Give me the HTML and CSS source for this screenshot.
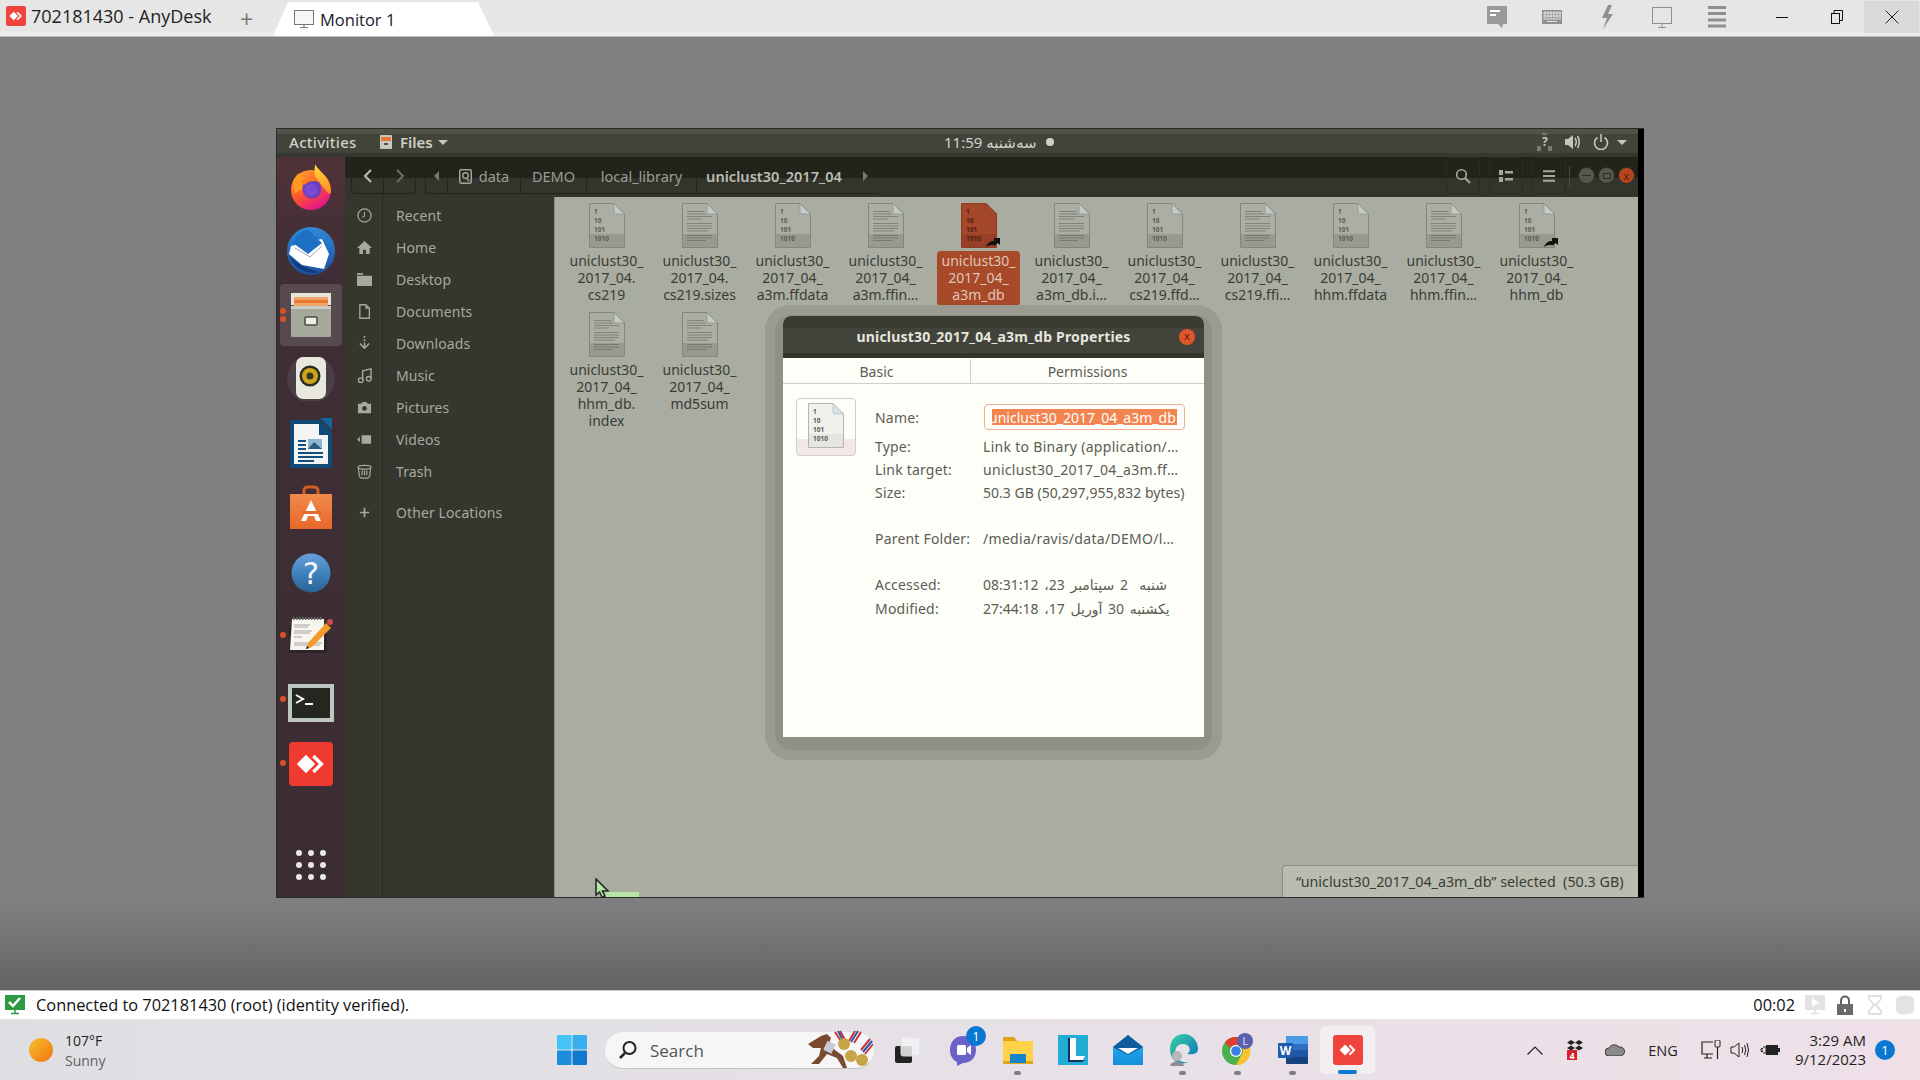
FILE: index.html
```html
<!DOCTYPE html>
<html lang="en">
<head>
<meta charset="utf-8">
<title>702181430 - AnyDesk</title>
<link rel="stylesheet" href="styles.css">
</head>
<body>
<svg class="defs" aria-hidden="true">
  <defs>
    <linearGradient id="ffBody" x1="0" y1="0" x2="0.6" y2="1"><stop offset="0" stop-color="#ffb02e"/><stop offset=".55" stop-color="#ff5a2c"/><stop offset="1" stop-color="#e31587"/></linearGradient>
    <linearGradient id="ffTop" x1="0" y1="0" x2="0" y2="1"><stop offset="0" stop-color="#ffe03a"/><stop offset="1" stop-color="#ff8a1f"/></linearGradient>
    <linearGradient id="tbBlue" x1="0" y1="0" x2="0" y2="1"><stop offset="0" stop-color="#2f8ad8"/><stop offset="1" stop-color="#1b4f9c"/></linearGradient>
    <linearGradient id="helpBlue" x1="0" y1="0" x2="0" y2="1"><stop offset="0" stop-color="#6b9fdc"/><stop offset=".5" stop-color="#3f83bd"/><stop offset="1" stop-color="#2a6394"/></linearGradient>
    <linearGradient id="bagOrange" x1="0" y1="0" x2="0" y2="1"><stop offset="0" stop-color="#f08a4a"/><stop offset="1" stop-color="#e8682a"/></linearGradient>
    <linearGradient id="edgeG" x1="0" y1="0" x2="1" y2="1"><stop offset="0" stop-color="#38d2a0"/><stop offset="1" stop-color="#0c6fc0"/></linearGradient>
    <linearGradient id="mailG" x1="0" y1="0" x2="0" y2="1"><stop offset="0" stop-color="#29b1ec"/><stop offset="1" stop-color="#1490dd"/></linearGradient>

    <symbol id="doc-base" viewBox="0 0 36 45">
      <path d="M.5.5H25L35.5 11V44.5H.5Z" fill="var(--sheet)" stroke="var(--edge)"/>
      <rect x="1" y="31" width="34" height="13" fill="var(--band)"/>
      <path d="M25 .5V9.500Q25 11 27 11H35.500Z" fill="var(--fold)" stroke="var(--edge)" stroke-width=".6"/>
    </symbol>
    <symbol id="doc-bin" viewBox="0 0 36 45">
      <use href="#doc-base"/>
      <g class="bin-text">
        <text x="5" y="11">1</text>
        <text x="5" y="20">10</text>
        <text x="5" y="29">101</text>
        <text x="5" y="38">1010</text>
      </g>
    </symbol>
    <symbol id="doc-txt" viewBox="0 0 36 45">
      <use href="#doc-base"/>
      <path d="M5 8.500H22M5 11H24M5 13.500H30M5 16H20M5 20.500H30M5 23H30M5 25.500H30M5 28H26M5 32.500H30M5 35H30M5 37.500H24" stroke="var(--ink)" stroke-width=".7" opacity=".75"/>
    </symbol>
    <symbol id="link-arrow" viewBox="0 0 14 12">
      <path d="M0 11C2 6 5 5 8 5V2H14V9L11.500 7L9 9.500C6 8.500 3 9 0 11Z" fill="#111"/>
    </symbol>
    <symbol id="anydesk-mark" viewBox="0 0 24 24">
      <path d="M8.500 5.500L15 12L8.500 18.500L2 12Z" fill="#fff"/>
      <path d="M14.500 5.500L21 12L14.500 18.500L12.800 16.800L17.600 12L12.800 7.200Z" fill="#fff"/>
    </symbol>
  </defs>
</svg>

<header class="rd-bar">
  <div class="rd-title">
    <svg class="rd-logo" viewBox="0 0 20 20"><rect width="20" height="20" rx="2" fill="#ef443b"/><use href="#anydesk-mark" x="2" y="2" width="16" height="16"/></svg>
    <span class="rd-title-text">702181430 - AnyDesk</span>
    <span class="rd-plus">+</span>
  </div>
  <div class="rd-tab">
    <svg class="rd-tab-icon" viewBox="0 0 20 20"><rect x=".5" y="1.500" width="19" height="14" fill="#f6f6f6" stroke="#777"/><path d="M10 15.500V18M6 18.500H14" stroke="#777" fill="none"/></svg>
    <span>Monitor 1</span>
  </div>
  <div class="rd-tools">
    <span class="rd-tool"><svg viewBox="0 0 20 22" width="20" height="22"><path d="M0 0H20V18H16L15 22L11 18H0Z" fill="#9a9a9a"/><path d="M3 4H13V6H3ZM3 8H9V10H3Z" fill="#fff"/></svg></span>
    <span class="rd-tool"><svg viewBox="0 0 20 14" width="20" height="14"><rect width="20" height="14" fill="#8f8f8f"/><path d="M1 3H19M1 6H19M1 9H19M3 1V8M6 1V8M9 1V8M12 1V8M15 1V8M18 1V8M5 11.500H15" stroke="#e6e6e6" fill="none"/></svg></span>
    <span class="rd-tool"><svg viewBox="0 0 14 24" width="14" height="24"><path d="M8 0L2 13H7L3 24L13 9H8L12 0Z" fill="#8f8f8f"/></svg></span>
    <span class="rd-tool"><svg viewBox="0 0 20 21" width="20" height="21"><rect x=".5" y=".5" width="19" height="16" fill="none" stroke="#8f8f8f"/><path d="M10 17V20M6 20.500H14" stroke="#8f8f8f" fill="none"/></svg></span>
    <span class="rd-tool"><svg viewBox="0 0 18 22" width="18" height="22"><path d="M0 1.500H18M0 7.500H18M0 14H18M0 20H18" stroke="#8f8f8f" stroke-width="3"/></svg></span>
  </div>
  <div class="rd-win">
    <span class="rd-ctl"><svg viewBox="0 0 12 12" width="12" height="12"><path d="M0 6.500H12" stroke="#111"/></svg></span>
    <span class="rd-ctl"><svg viewBox="0 0 12 14" width="12" height="14"><rect x=".5" y="3.500" width="8" height="10" fill="#e6e6e6" stroke="#111"/><path d="M3 3V.5H11.500V10.500H9" fill="none" stroke="#111"/></svg></span>
    <span class="rd-ctl rd-close"><svg viewBox="0 0 14 14" width="14" height="14"><path d="M.5.500L13.500 13.500M13.500.5L.5 13.500" stroke="#222"/></svg></span>
  </div>
</header>

<main class="remote">
  <section class="ubuntu">
    <div class="panel">
      <div class="panel-left">
        <span class="activities">Activities</span>
        <svg class="panel-files-icon" viewBox="0 0 14 14"><rect x="1" y="0" width="12" height="14" rx="1" fill="#c8c9c0"/><rect x="2" y="2" width="10" height="4" fill="#e9772f"/><rect x="5" y="8" width="4" height="2" fill="#555"/></svg>
        <span class="panel-app">Files</span>
        <span class="panel-caret"></span>
      </div>
      <div class="clock"><span dir="rtl">سه‌شنبه 11:59</span><span class="clock-dot"></span></div>
      <div class="panel-right">
        <svg viewBox="0 0 16 18" width="16" height="18"><rect x="5" y="0" width="5" height="2" fill="#77796f"/><rect x="0" y="13" width="4" height="5" fill="#77796f"/><rect x="11" y="13" width="4" height="5" fill="#77796f"/><text class="net-q" x="5" y="13">?</text></svg>
        <svg viewBox="0 0 16 16" width="16" height="16"><path d="M0 5H3L8 1V15L3 11H0Z" fill="#c5c6bd"/><path d="M10 4Q12.500 8 10 12M12.500 2Q16 8 12.500 14" fill="none" stroke="#c5c6bd" stroke-width="1.500"/></svg>
        <svg viewBox="0 0 16 16" width="16" height="16"><path d="M4.500 3.500A6.500 6.500 0 1 0 11.500 3.500M8 0V8" fill="none" stroke="#c5c6bd" stroke-width="1.600"/></svg>
        <span class="panel-caret"></span>
      </div>
    </div>
    <div class="ubuntu-body">
      <nav class="dock">
        <div class="dock-item">
          <svg viewBox="0 0 48 48" width="48" height="48"><circle cx="24" cy="27" r="20" fill="url(#ffBody)"/><path d="M28 1C31 8 43 13 44 28C44 36 36 24 30 16C26 12 28 6 28 1Z" fill="url(#ffTop)"/><path d="M6 18C9 13 11 11 11 10C12 14 15 15 20 15C15 19 14 23 16 26L8 30Z" fill="#ff9a23"/><circle cx="25" cy="26" r="9.500" fill="#6a3fc0"/><circle cx="24" cy="27" r="6.500" fill="#7a4ad0"/><path d="M14 18C20 14 28 15 32 19C27 17 21 18 18 22Z" fill="#ff7a1f"/></svg>
        </div>
        <div class="dock-item">
          <svg viewBox="0 0 50 50" width="50" height="50"><circle cx="25" cy="25" r="24" fill="url(#tbBlue)"/><path d="M5 20L36 13L43 28L38 43L16 39L3 28Z" fill="#fff"/><path d="M7 17L22 28L36 17L22 4C14 5 9 10 7 17Z" fill="#1e70c4"/><path d="M9 22L24 31L36 20" fill="none" stroke="#9aa7b5" stroke-width="1"/><path d="M3 30C8 42 20 49 34 46C24 44 14 40 3 30Z" fill="#15397d"/></svg>
        </div>
        <div class="dock-item dock-active">
          <span class="dot-pair"><i class="run-dot"></i><i class="run-dot"></i></span>
          <svg viewBox="0 0 44 44" width="44" height="44"><rect x="2" y="0" width="40" height="12" fill="#e5e5dc"/><rect x="5" y="4" width="34" height="10" fill="#f0a468"/><rect x="5" y="7" width="34" height="3" fill="#e77a30"/><rect x="2" y="13" width="40" height="31" rx="1" fill="#a6a89c"/><rect x="2" y="13" width="40" height="3" fill="#cbccc2"/><rect x="16" y="24" width="12" height="8" rx="1" fill="#eeeee6" stroke="#4a4a44" stroke-width="1.500"/></svg>
        </div>
        <div class="dock-item">
          <svg viewBox="0 0 50 44" width="50" height="44"><circle cx="25" cy="22" r="24" fill="#4a3e47"/><rect x="10" y="0" width="30" height="42" rx="7" fill="#e9e8df"/><circle cx="24" cy="19" r="10.500" fill="#2d2a22"/><circle cx="24" cy="19" r="8" fill="#c8a81a"/><circle cx="24" cy="19" r="3.500" fill="#3a3320"/></svg>
        </div>
        <div class="dock-item">
          <svg viewBox="0 0 42 50" width="42" height="50"><path d="M0 2H30L42 14V50H0Z" fill="#0e4a74"/><path d="M4 6H29V17H38V46H4Z" fill="#f2f4f5"/><path d="M30 0H42V12Z" fill="#13649b"/><rect x="18" y="21" width="14" height="10" fill="#8fb6cf"/><path d="M18 31L24 24L32 31Z" fill="#2d5a7c"/><path d="M8 23H16M8 27H16M8 31H16M8 35H33M8 39H33M8 43H24" stroke="#124f7c" stroke-width="2"/></svg>
        </div>
        <div class="dock-item">
          <svg viewBox="0 0 42 44" width="42" height="44"><path d="M14 11V6Q14 2 18 2H24Q28 2 28 6V11" fill="none" stroke="#d15c25" stroke-width="3"/><path d="M0 9H42V44H0Z" fill="url(#bagOrange)"/><path d="M21 15L31 36H26L24 31H18L16 36H11Z" fill="#fff"/><rect x="11" y="26" width="20" height="3" fill="#e8682a"/></svg>
        </div>
        <div class="dock-item dock-help">
          <svg viewBox="0 0 40 40" width="40" height="40"><circle cx="20" cy="20" r="19.500" fill="url(#helpBlue)"/><text class="help-q" x="20" y="31" text-anchor="middle">?</text></svg>
        </div>
        <div class="dock-item">
          <i class="run-dot dock-dot"></i>
          <svg viewBox="0 0 46 36" width="46" height="36"><rect x="1" y="8" width="38" height="28" fill="#2c2428"/><path d="M4 2H36V33H2Z" fill="#f6f6ee"/><path d="M5 1H35" stroke="#6b6b65" stroke-width="4" stroke-dasharray="1.500 1.500"/><path d="M6 8H22M6 10H20M6 14H24M6 16H22M6 20H14M6 26H34M6 28H32" stroke="#a6a69e"/><path d="M20 26L38 6L43 11L24 30L18 32Z" fill="#f29a2e"/><circle cx="42" cy="5" r="3" fill="#cf4a4f"/><path d="M19 29L18 32L21 31Z" fill="#111"/></svg>
        </div>
        <div class="dock-item dock-term">
          <i class="run-dot dock-dot"></i>
          <svg viewBox="0 0 46 38" width="46" height="38"><rect width="46" height="38" fill="#bcc6c3"/><rect x="4" y="4" width="38" height="30" fill="#24261f"/><path d="M8 11L15 15L8 19" fill="none" stroke="#fff" stroke-width="2"/><path d="M17 20H25" stroke="#fff" stroke-width="2"/></svg>
        </div>
        <div class="dock-item dock-any">
          <i class="run-dot dock-dot"></i>
          <svg viewBox="0 0 44 44" width="44" height="44"><rect width="44" height="44" rx="4" fill="#ef3a30"/><use href="#anydesk-mark" x="5" y="5" width="34" height="34"/></svg>
        </div>
        <div class="dock-apps">
          <i></i><i></i><i></i><i></i><i></i><i></i><i></i><i></i><i></i>
        </div>
      </nav>

      <div class="nautilus">
        <div class="toolbar">
          <div class="tb-group nav-group">
            <span class="tb-btn"><svg viewBox="0 0 10 14" width="10" height="14"><path d="M8 1L2 7L8 13" fill="none" stroke="#c0c1b6" stroke-width="2"/></svg></span>
            <span class="tb-btn"><svg viewBox="0 0 10 14" width="10" height="14"><path d="M2 1L8 7L2 13" fill="none" stroke="#6c6e63" stroke-width="2"/></svg></span>
          </div>
          <div class="tb-group path-group">
            <span class="seg seg-arrow"><i class="tri-left"></i></span>
            <span class="seg seg-data"><svg viewBox="0 0 14 16" width="13" height="15"><rect x=".8" y=".8" width="12.400" height="14.400" rx="1.500" fill="none" stroke="#a2a498" stroke-width="1.600"/><circle cx="7" cy="7" r="3" fill="none" stroke="#a2a498" stroke-width="1.500"/><path d="M8 10L11 13" stroke="#a2a498" stroke-width="1.500"/></svg>data</span>
            <span class="seg seg-demo">DEMO</span>
            <span class="seg seg-lib">local_library</span>
            <span class="seg seg-cur">uniclust30_2017_04</span>
            <span class="seg-end"><i class="tri-right"></i></span>
          </div>
          <div class="tb-right">
            <span class="tb-btn tb-solo"><svg viewBox="0 0 16 16" width="16" height="16"><circle cx="6.500" cy="6.500" r="4.800" fill="none" stroke="#a6a89c" stroke-width="1.600"/><path d="M10 10L15 15" stroke="#a6a89c" stroke-width="2"/></svg></span>
            <span class="tb-btn tb-solo"><svg viewBox="0 0 14 12" width="14" height="12"><path d="M0 0H4V5H0ZM0 7H4V12H0ZM6 1H14V3.500H6ZM6 8H14V10.500H6Z" fill="#a6a89c"/></svg></span>
            <span class="tb-btn tb-solo"><svg viewBox="0 0 12 12" width="12" height="12"><path d="M0 1.200H12M0 6H12M0 10.800H12" stroke="#a6a89c" stroke-width="2"/></svg></span>
            <span class="tb-sep"></span>
            <span class="wm wm-min"><i></i></span>
            <span class="wm wm-max"><i></i></span>
            <span class="wm wm-close">x</span>
          </div>
        </div>
        <div class="files-body">
          <aside class="sidebar">
            <div class="side-row"><svg viewBox="0 0 16 16"><circle cx="8" cy="8" r="7" fill="none" stroke="currentColor" stroke-width="1.300"/><path d="M8 4V8.500L5.500 10" fill="none" stroke="currentColor" stroke-width="1.100"/></svg><span>Recent</span></div>
            <div class="side-row"><svg viewBox="0 0 16 16"><path d="M8 1L16 8.500H13.500V15H9.500V10.500H6.500V15H2.500V8.500H0Z" fill="currentColor"/></svg><span>Home</span></div>
            <div class="side-row"><svg viewBox="0 0 16 16"><path d="M0 1H6L7 3H0ZM0 4H16V15H0Z" fill="currentColor"/></svg><span>Desktop</span></div>
            <div class="side-row"><svg viewBox="0 0 16 16"><path d="M3 .8H9.500L13.200 4.500V15.200H3Z" fill="none" stroke="currentColor" stroke-width="1.400"/><path d="M9 1V5H13" fill="currentColor"/></svg><span>Documents</span></div>
            <div class="side-row"><svg viewBox="0 0 16 16"><path d="M8 0V2M8 3.500V5.500M8 7V12M3 8L8 13L13 8" fill="none" stroke="currentColor" stroke-width="1.600"/></svg><span>Downloads</span></div>
            <div class="side-row"><svg viewBox="0 0 16 16"><circle cx="4" cy="13" r="2.500" fill="none" stroke="currentColor" stroke-width="1.500"/><circle cx="12.500" cy="11.500" r="2.500" fill="none" stroke="currentColor" stroke-width="1.500"/><path d="M6 13V3L15 1V11" fill="none" stroke="currentColor" stroke-width="1.500"/></svg><span>Music</span></div>
            <div class="side-row"><svg viewBox="0 0 16 16"><path d="M1 4H4.500L6 2H10L11.500 4H15V14H1Z" fill="currentColor"/><circle cx="8" cy="9" r="2.500" fill="#35362e"/></svg><span>Pictures</span></div>
            <div class="side-row"><svg viewBox="0 0 16 16"><path d="M0 8L3 5V11ZM5 3.500H15V12.500H5Z" fill="currentColor"/></svg><span>Videos</span></div>
            <div class="side-row"><svg viewBox="0 0 16 16"><ellipse cx="8" cy="3.500" rx="7" ry="2" fill="none" stroke="currentColor" stroke-width="1.300"/><path d="M1.500 4L2.500 13Q3 15 5 15H11Q13 15 13.500 13L14.500 4M5.500 7V12M8 7V12M10.500 7V12" fill="none" stroke="currentColor" stroke-width="1.300"/></svg><span>Trash</span></div>
            <div class="side-row side-other"><svg viewBox="0 0 16 16"><path d="M8 3V13M3 8H13" stroke="currentColor" stroke-width="1.800"/></svg><span>Other Locations</span></div>
          </aside>
          <div class="content">
            <div class="file"><svg class="doc"><use href="#doc-bin"/></svg><div class="fname">uniclust30_<br>2017_04.<br>cs219</div></div>
            <div class="file"><svg class="doc"><use href="#doc-txt"/></svg><div class="fname">uniclust30_<br>2017_04.<br>cs219.sizes</div></div>
            <div class="file"><svg class="doc"><use href="#doc-bin"/></svg><div class="fname">uniclust30_<br>2017_04_<br>a3m.ffdata</div></div>
            <div class="file"><svg class="doc"><use href="#doc-txt"/></svg><div class="fname">uniclust30_<br>2017_04_<br>a3m.ffin…</div></div>
            <div class="file file-selected"><span class="icon-wrap"><svg class="doc"><use href="#doc-bin"/></svg><svg class="link-badge"><use href="#link-arrow"/></svg></span><div class="fname">uniclust30_<br>2017_04_<br>a3m_db</div></div>
            <div class="file"><svg class="doc"><use href="#doc-txt"/></svg><div class="fname">uniclust30_<br>2017_04_<br>a3m_db.i…</div></div>
            <div class="file"><svg class="doc"><use href="#doc-bin"/></svg><div class="fname">uniclust30_<br>2017_04_<br>cs219.ffd…</div></div>
            <div class="file"><svg class="doc"><use href="#doc-txt"/></svg><div class="fname">uniclust30_<br>2017_04_<br>cs219.ffi…</div></div>
            <div class="file"><svg class="doc"><use href="#doc-bin"/></svg><div class="fname">uniclust30_<br>2017_04_<br>hhm.ffdata</div></div>
            <div class="file"><svg class="doc"><use href="#doc-txt"/></svg><div class="fname">uniclust30_<br>2017_04_<br>hhm.ffin…</div></div>
            <div class="file"><span class="icon-wrap"><svg class="doc"><use href="#doc-bin"/></svg><svg class="link-badge"><use href="#link-arrow"/></svg></span><div class="fname">uniclust30_<br>2017_04_<br>hhm_db</div></div>
            <div class="file"><svg class="doc"><use href="#doc-txt"/></svg><div class="fname">uniclust30_<br>2017_04_<br>hhm_db.<br>index</div></div>
            <div class="file"><svg class="doc"><use href="#doc-txt"/></svg><div class="fname">uniclust30_<br>2017_04_<br>md5sum</div></div>
          </div>
        </div>
      </div>
    </div>

    <div class="floating-status">“uniclust30_2017_04_a3m_db” selected  (50.3 GB)</div>
    <div class="green-bar"></div>
    <svg class="cursor" viewBox="0 0 14 20"><path d="M1 1V17L4.500 14L7 19L10 18L7.500 13H13Z" fill="#b7e3a5" stroke="#2a2c24" stroke-width="1.600"/></svg>

    <div class="dialog-halo"></div>
    <div class="dialog">
      <div class="dlg-title">
        <span class="dlg-title-text">uniclust30_2017_04_a3m_db Properties</span>
        <span class="dlg-close">x</span>
      </div>
      <div class="dlg-tabs">
        <span class="dlg-tab dlg-tab-on">Basic</span>
        <span class="dlg-tab">Permissions</span>
      </div>
      <div class="dlg-body">
        <div class="dlg-icon"><svg class="doc doc-bright"><use href="#doc-bin"/></svg></div>
        <div class="dlg-grid">
          <span class="k k-name">Name:</span>
          <span class="name-entry"><span class="name-sel"><span class="name-text">uniclust30_2017_04_a3m_db</span></span></span>
          <span class="k">Type:</span><span class="v">Link to Binary (application/…</span>
          <span class="k">Link target:</span><span class="v">uniclust30_2017_04_a3m.ff…</span>
          <span class="k">Size:</span><span class="v v-size">50.3 GB (50,297,955,832 bytes)</span>
          <span class="k">Parent Folder:</span><span class="v">/media/ravis/data/DEMO/l…</span>
          <span class="k">Accessed:</span><span class="v v-fa">شنبه&nbsp;&nbsp;2 سپتامبر 23، 08:31:12</span>
          <span class="k">Modified:</span><span class="v v-fa">یکشنبه 30 آوریل 17، 27:44:18</span>
        </div>
      </div>
    </div>
  </section>
</main>

<footer class="rd-status">
  <svg class="conn-icon" viewBox="0 0 20 20"><rect y="0" width="20" height="15" fill="#2c9a44"/><path d="M4 7L8 11L15 3" fill="none" stroke="#fff" stroke-width="2.500"/><path d="M10 15V18M6 18.500H14" stroke="#2c9a44" stroke-width="1.500"/></svg>
  <span class="conn-text">Connected to 702181430 (root) (identity verified).</span>
  <span class="conn-time">00:02</span>
  <span class="conn-ico"><svg viewBox="0 0 20 20" width="20" height="20"><rect width="20" height="15" fill="#e3e3e3"/><path d="M7 3L14 7.500L7 12Z" fill="#fff"/><path d="M10 15V18M6 18.500H14" stroke="#e3e3e3" stroke-width="1.500"/></svg></span>
  <span class="conn-ico"><svg viewBox="0 0 16 20" width="16" height="20"><path d="M4 9V5.500A4 4 0 0 1 12 5.500V9" fill="none" stroke="#5f5f5f" stroke-width="2"/><rect y="9" width="16" height="11" fill="#6a6a6a"/><rect x="7" y="14" width="2" height="3" fill="#fff"/></svg></span>
  <span class="conn-ico"><svg viewBox="0 0 14 20" width="14" height="20"><path d="M1 1H13V4L8 10L13 16V19H1V16L6 10L1 4Z" fill="none" stroke="#e0e0e0" stroke-width="2"/></svg></span>
  <span class="conn-ico"><svg viewBox="0 0 18 20" width="18" height="20"><path d="M0 4A9 3.500 0 0 1 18 4V16A9 3.500 0 0 1 0 16Z" fill="#e3e3e3"/></svg></span>
</footer>

<footer class="taskbar">
  <div class="weather">
    <span class="sun"></span>
    <div class="weather-text"><span class="w-temp">107°F</span><span class="w-desc">Sunny</span></div>
  </div>
  <div class="task-center">
    <svg class="win-logo" viewBox="0 0 30 30"><rect width="14.500" height="14.500" rx="1" fill="#45c4f7"/><rect x="15.500" width="14.500" height="14.500" rx="1" fill="#36b0ee"/><rect y="15.500" width="14.500" height="14.500" rx="1" fill="#1c8ddc"/><rect x="15.500" y="15.500" width="14.500" height="14.500" rx="1" fill="#0f78cf"/></svg>
    <div class="searchbox">
      <svg viewBox="0 0 20 20" width="20" height="20"><circle cx="11.500" cy="8" r="6" fill="none" stroke="#222" stroke-width="2"/><path d="M7 13L2 18" stroke="#222" stroke-width="2.500"/></svg>
      <span class="search-text">Search</span>
      <svg class="medal-art" viewBox="0 0 68 40" width="68" height="40"><path d="M30 2L38 14M35 1L42 13M50 1L44 11M56 2L49 13M65 9L56 20M68 14L60 24" stroke="#c9323a" stroke-width="2"/><path d="M33 1L40 14M53 1L46 12M67 11L58 22" stroke="#2c57a8" stroke-width="2"/><circle cx="39" cy="14" r="6" fill="#c9a34a"/><circle cx="46" cy="26" r="6" fill="#c9a34a"/><circle cx="57" cy="30" r="6" fill="#c9a34a"/><path d="M3 14L16 6L22 4L26 8L24 14L30 20L38 26L42 38L38 38L32 28L22 24L14 34L6 34L14 26L16 18L8 18Z" fill="#7a4a30"/><rect x="20" y="12" width="9" height="10" fill="#c9c9d8" transform="rotate(25 24 17)"/></svg>
    </div>
    <div class="tapp"><svg viewBox="0 0 26 26" width="26" height="26"><rect x="0" y="9" width="17" height="17" rx="2" fill="#222"/><rect x="6" y="0" width="19" height="19" rx="2" fill="#f2f2f4" fill-opacity=".85" stroke="#ddd"/></svg></div>
    <div class="tapp tapp-badge"><svg viewBox="0 0 28 34" width="28" height="34"><path d="M14 3C6 3 1 9 1 17C1 23 4 27 8 29V33L14 30C22 30 27 24 27 17C27 9 22 3 14 3Z" fill="#6a62c8"/><rect x="8" y="12" width="9" height="10" rx="1.500" fill="#fff"/><path d="M18 15L22 12V22L18 19Z" fill="#fff"/></svg><span class="t-badge">1</span></div>
    <div class="tapp tapp-run"><svg viewBox="0 0 30 30" width="30" height="30"><path d="M0 2H11L14 6H0Z" fill="#dfa214"/><path d="M0 6H30V28H0Z" fill="#ffd24a"/><rect x="0" y="26" width="30" height="3" fill="#e0a612"/><rect x="7" y="19" width="16" height="9" rx="1" fill="#1485c9"/></svg></div>
    <div class="tapp"><svg viewBox="0 0 30 30" width="30" height="30"><rect width="30" height="30" fill="#22add6"/><path d="M10 3H18V21H27L24 27H10Z" fill="#fff"/><path d="M10 3H12V25H27L24 27H10Z" fill="#12305e"/></svg></div>
    <div class="tapp"><svg viewBox="0 0 30 30" width="30" height="30"><path d="M15 0L30 12V30H0V12Z" fill="url(#mailG)"/><path d="M15 0L30 12L15 20L0 12Z" fill="#0f5d9f"/><path d="M5 13L25 13L15 19Z" fill="#fff"/></svg></div>
    <div class="tapp tapp-run"><svg viewBox="0 0 30 34" width="30" height="34"><path d="M2 16C2 6 9 1 16 1C24 1 30 8 30 16C30 21 24 22 19 21C24 18 22 11 15 11C8 11 6 17 8 23C10 28 15 30 20 29C13 33 2 29 2 16Z" fill="url(#edgeG)"/><circle cx="9" cy="23" r="5" fill="#b8b8b8"/><path d="M2 33C3 27 15 27 16 33Z" fill="#8f8f8f"/></svg></div>
    <div class="tapp tapp-run"><svg viewBox="0 0 32 34" width="32" height="34"><circle cx="14" cy="18" r="14" fill="#4caf50"/><path d="M14 4A14 14 0 0 1 27 12H14A6 6 0 0 0 8 15L3 9A14 14 0 0 1 14 4Z" fill="#e53c30"/><path d="M27 12A14 14 0 0 1 14 32L20 21A6 6 0 0 0 14 12Z" fill="#fbc02d"/><circle cx="14" cy="18" r="6" fill="#fff"/><circle cx="14" cy="18" r="4.800" fill="#3d7fe8"/><circle cx="23" cy="8" r="8" fill="#5b5fb0"/><text class="t-l" x="23" y="11.500" text-anchor="middle">L</text></svg></div>
    <div class="tapp tapp-run"><svg viewBox="0 0 30 30" width="30" height="30"><rect x="8" y="1" width="22" height="28" rx="2" fill="#2f6ec0"/><rect x="8" y="1" width="22" height="8" rx="1" fill="#4a9be6"/><rect x="8" y="15" width="22" height="7" fill="#1f56a5"/><rect x="8" y="22" width="22" height="7" rx="1" fill="#16407e"/><rect y="8" width="15" height="15" rx="1" fill="#1e5aae"/><text class="t-w" x="7.500" y="20" text-anchor="middle">W</text></svg></div>
    <div class="tapp tapp-active"><svg viewBox="0 0 30 30" width="30" height="30"><rect width="30" height="30" rx="3" fill="#ef443b"/><use href="#anydesk-mark" x="5" y="5" width="20" height="20"/></svg></div>
  </div>
  <div class="tray">
    <svg class="tray-chev" viewBox="0 0 16 9" width="16" height="9"><path d="M.5 8.500L8 1L15.500 8.500" fill="none" stroke="#222" stroke-width="1.200"/></svg>
    <svg class="tray-drop" viewBox="0 0 20 20" width="20" height="20"><path d="M4 0L8 2.500L4 5L0 2.500ZM12 0L16 2.500L12 5L8 2.500ZM4 5.500L8 8L4 10.500L0 8ZM12 5.500L16 8L12 10.500L8 8Z" fill="#222"/><rect y="10" width="10" height="10" fill="#d8202c"/><text class="t-4" x="5" y="18.500" text-anchor="middle">4</text></svg>
    <svg class="tray-cloud" viewBox="0 0 20 12" width="20" height="12"><path d="M4 12A4 4 0 0 1 4 4A6 6 0 0 1 14 3A4.500 4.500 0 0 1 16 12Z" fill="#8a8a8a" stroke="#222" stroke-width=".8"/></svg>
    <span class="tray-lang">ENG</span>
    <svg class="tray-net" viewBox="0 0 20 20" width="20" height="20"><path d="M12 2H1V14H12M3 18H11M6 14V18" fill="none" stroke="#222" stroke-width="1.200"/><rect x="14" y="0" width="5" height="7" rx="1" fill="none" stroke="#222"/><path d="M16.500 7V19" stroke="#222" stroke-width="1.200"/></svg>
    <svg class="tray-vol" viewBox="0 0 20 16" width="20" height="16"><path d="M1 5H4L9 1V15L4 11H1Z" fill="none" stroke="#222"/><path d="M12 5Q13.500 8 12 11M14.500 3Q17 8 14.500 13M17 1Q20 8 17 15" fill="none" stroke="#222"/></svg>
    <svg class="tray-bat" viewBox="0 0 20 14" width="20" height="14"><path d="M0 7H3M3 4H6V10H3M3 5.500H1M3 8.500H1" stroke="#222" fill="none"/><rect x="6" y="2" width="12" height="10" fill="#222"/><rect x="18" y="5" width="2" height="4" fill="#222"/></svg>
    <div class="tray-clock"><span>3:29 AM</span><span>9/12/2023</span></div>
    <span class="tray-note">1</span>
  </div>
</footer>
</body>
</html>
```

FILE: styles.css
```css
* { box-sizing: border-box; }
html, body { margin: 0; padding: 0; }
body {
  width: 1920px;
  height: 1080px;
  overflow: hidden;
  display: flex;
  flex-direction: column;
  font-family: "Open Sans", "Noto Sans", sans-serif;
  background: #808080;
}
.defs { width: 0; height: 0; display: block; flex: none; }

/* AnyDesk top bar */
.rd-bar {
  height: 37px;
  flex: none;
  display: flex;
  padding-right: 1px;
  background: linear-gradient(#e6e6e6 31px, #ebebeb 31px, #ebebeb 36px, #bdbdbd 36px);
}
.rd-title {
  flex: 0 0 273px;
  display: flex;
  align-items: center;
  padding: 0 0 6px 6px;
  font-size: 18px;
  color: #222;
}
.rd-logo { width: 20px; height: 20px; flex: none; }
.rd-title-text { margin-left: 5px; white-space: nowrap; width: 209px; }
.rd-plus { font-size: 23px; color: #777; line-height: 1; margin-top: 8px; }
.rd-tab {
  flex: 0 0 221px;
  margin-top: 2px;
  height: 34px;
  background: #fff;
  clip-path: polygon(15px 0, 205px 0, 100% 100%, 0 100%);
  display: flex;
  align-items: center;
  padding-left: 21px;
  gap: 6px;
  font-size: 16.500px;
  color: #1a1a2a;
}
.rd-tab-icon { width: 20px; height: 20px; }
.rd-tools {
  margin-left: auto;
  display: flex;
  padding-top: 1px;
  margin-right: 10px;
}
.rd-tool, .rd-ctl {
  width: 55px;
  height: 32px;
  display: flex;
  align-items: center;
  justify-content: center;
}
.rd-win { display: flex; padding-top: 1px; }
.rd-close { background: #d9d9d9; }

/* Remote area */
.remote {
  flex: none;
  height: 953px;
  padding: 91px 0 0 276px;
  background: linear-gradient(#808080 860px, #646464 100%);
}
.ubuntu {
  position: relative;
  width: 1368px;
  height: 770px;
  display: flex;
  flex-direction: column;
  background: #000;
  padding-right: 6px;
  border-top: 1px solid #2b2c27;
  border-left: 1px solid #2b2c27;
  border-bottom: 1px solid #2b2c27;
  font-family: "Noto Sans", "DejaVu Sans", sans-serif;
}
.panel {
  height: 28px;
  flex: none;
  display: flex;
  align-items: center;
  padding-bottom: 2px;
  background: linear-gradient(#50524a 5px, #42433a 5px, #42433a 24px, #36372f 24px);
  font-size: 15px;
  color: #d0d1c8;
}
.panel-left {
  width: 667px;
  display: flex;
  align-items: center;
  padding-left: 12px;
}
.activities { font-weight: 500; width: 90px; white-space: nowrap; letter-spacing: .3px; }
.panel-files-icon { width: 14px; height: 14px; }
.panel-app { margin-left: 7px; font-weight: 600; }
.panel-caret {
  display: block;
  width: 0;
  height: 0;
  margin-left: 5px;
  border-left: 5px solid transparent;
  border-right: 5px solid transparent;
  border-top: 5px solid #c5c6bd;
}
.clock {
  display: flex;
  align-items: center;
  gap: 9px;
  font-size: 15px;
}
.clock-dot { width: 8px; height: 8px; border-radius: 50%; background: #d0d1c8; }
.panel-right {
  margin-left: auto;
  display: flex;
  align-items: center;
  gap: 12px;
  padding-right: 11px;
}
.panel-right .panel-caret { margin-left: -4px; }
.net-q { font: 700 12px "Noto Sans", sans-serif; fill: #c5c6bd; }

.ubuntu-body { flex: 1; display: flex; min-height: 0; }

/* Dock */
.dock {
  flex: 0 0 68px;
  background: linear-gradient(#4f3338 0, #3f2e35 120px, #3b2d33 100%);
  display: flex;
  flex-direction: column;
}
.dock-item {
  position: relative;
  height: 64px;
  flex: none;
  margin: 0 3px;
  display: flex;
  align-items: center;
  justify-content: center;
}
.dock-item:first-child { margin-top: -2px; }
.dock-help svg { margin-top: 4px; }
.dock-term svg { margin-top: 7px; }
.dock-any svg { margin-top: 2px; }
.dock-active { background: #574a4e; border-radius: 4px; height: 62px; margin: 1px 3px; }
.run-dot { display: block; width: 6px; height: 6px; border-radius: 50%; background: #d7541f; }
.dock-dot { position: absolute; left: 0; top: 29px; }
.dot-pair { position: absolute; left: 0; top: 24px; display: flex; flex-direction: column; gap: 2px; }
.help-q { font: 400 31px "DejaVu Sans", sans-serif; fill: #f4f6f8; }
.dock-apps {
  margin: 55px auto 0;
  display: grid;
  grid-template-columns: repeat(3, 6px);
  gap: 6px;
  width: 30px;
}
.dock-apps i { width: 6px; height: 6px; border-radius: 50%; background: #e9e7e2; }

/* Nautilus */
.nautilus { flex: 1; display: flex; flex-direction: column; min-width: 0; }
.toolbar {
  height: 40px;
  flex: none;
  display: flex;
  align-items: flex-start;
  padding-left: 6px;
  background: linear-gradient(#22241c 21px, #33352c 21px);
  font-size: 14.500px;
  color: #9b9d90;
}
.tb-group {
  display: flex;
  height: 37px;
  border: 1px solid #20221b;
  border-radius: 5px;
}
.nav-group { width: 65px; }
.tb-btn {
  width: 32px;
  display: flex;
  align-items: center;
  justify-content: center;
}
.tb-btn + .tb-btn { border-left: 1px solid #20221b; }
.path-group { margin-left: 9px; border-right: 0; border-radius: 5px 0 0 5px; line-height: 37px; padding-top: 1px; }
.seg {
  display: flex;
  align-items: center;
  justify-content: center;
  border-right: 1px solid #20221b;
  white-space: nowrap;
}
.seg-arrow { width: 22px; }
.seg-data { width: 73px; gap: 7px; }
.seg-demo { width: 66px; }
.seg-lib { width: 110px; }
.seg-cur { width: 154px; font-weight: 600; color: #bcbdb2; border-right: 0; letter-spacing: .05px; }
.seg-end { width: 28px; display: flex; align-items: center; justify-content: center; }
.tri-left, .tri-right { display: block; width: 0; height: 0; border-top: 5px solid transparent; border-bottom: 5px solid transparent; }
.tri-left { border-right: 5px solid #77796e; }
.tri-right { border-left: 5px solid #77796e; }
.tb-right { margin-left: auto; display: flex; align-items: center; height: 37px; padding-right: 3px; }
.tb-solo { width: 34px; height: 37px; border: 1px solid #2a2c24; border-radius: 5px; margin-right: 9px; }
.tb-btn.tb-solo + .tb-btn.tb-solo { border-left: 1px solid #2a2c24; }
.tb-sep { width: 1px; height: 20px; background: #4a4c42; margin: 0 5px 0 -6px; }
.wm {
  width: 17px;
  height: 17px;
  border-radius: 50%;
  margin-left: 3px;
  background: #55574c;
  border: 1px solid #2c2e26;
  display: flex;
  align-items: center;
  justify-content: center;
}
.wm-min i { display: block; width: 9px; height: 1px; background: #2c2e26; }
.wm-max i { display: block; width: 8px; height: 6px; border: 1px solid #2c2e26; }
.wm-close { background: #b8431f; color: #4a1c0c; font-size: 11px; line-height: 1; }

.files-body { flex: 1; display: flex; min-height: 0; }
.sidebar {
  flex: 0 0 209px;
  padding-top: 2px;
  background: #35362e linear-gradient(to right, transparent 37px, #25261f 37px, #25261f 38px, transparent 38px);
  color: #a8a99e;
  font-size: 14px;
  letter-spacing: .1px;
}
.side-row {
  height: 32px;
  display: flex;
  align-items: center;
  padding-left: 12px;
}
.side-row svg { width: 15px; height: 15px; flex: none; }
.side-row span { margin-left: 24px; white-space: nowrap; }
.side-other { margin-top: 9px; }

.content {
  flex: 1;
  min-width: 0;
  padding: 6px 0 0 5px;
  background: #a9aca0;
  border-left: 1px solid #8b8d82;
  display: grid;
  grid-template-columns: repeat(11, 93px);
  grid-auto-rows: min-content;
  row-gap: 8px;
  align-content: start;
  font-size: 14px;
  color: #3b3c36;
  --sheet: #acaea3;
  --band: #989a8f;
  --edge: #84867b;
  --fold: #c2cbc8;
  --ink: #5a5c52;
}
.file {
  display: flex;
  flex-direction: column;
  align-items: center;
  height: 101px;
}
.doc { width: 36px; height: 45px; display: block; flex: none; }
.bin-text { font: 700 6.500px "Noto Sans", sans-serif; fill: var(--ink); }
.icon-wrap { position: relative; display: block; width: 36px; height: 45px; flex: none; }
.link-badge { position: absolute; right: -3px; bottom: 0; width: 14px; height: 12px; }
.fname {
  margin-top: 3px;
  padding: 1px 0 3px;
  width: 83px;
  line-height: 17px;
  text-align: center;
  white-space: nowrap;
  border-radius: 4px;
}
.file-selected { --sheet: #a5472a; --band: #983f27; --edge: #8f3c22; --fold: #a5472a; --ink: #4f2012; }
.file-selected .fname { background: #a8492a; color: #dfc6b8; }

.floating-status {
  position: absolute;
  right: 6px;
  bottom: 0;
  width: 356px;
  height: 32px;
  padding: 7px 0 0 13px;
  background: #b9bcae;
  border: 1px solid #8e9085;
  border-width: 1px 0 0 1px;
  border-radius: 4px 0 0 0;
  font-size: 14.300px;
  line-height: 18px;
  color: #3b3c36;
  white-space: pre;
}
.green-bar { position: absolute; left: 328px; bottom: 0; width: 34px; height: 5px; background: #b7e3a5; }
.cursor { position: absolute; left: 318px; bottom: -1px; width: 14px; height: 20px; }

/* Properties dialog */
.dialog-halo {
  position: absolute;
  left: 488px;
  top: 176px;
  width: 457px;
  height: 455px;
  border-radius: 26px;
  background: #8f9186;
  box-shadow: inset 0 0 0 10px #9a9c91;
}
.dialog {
  position: absolute;
  left: 506px;
  top: 187px;
  width: 421px;
  height: 421px;
  border-radius: 8px 8px 0 0;
  background: #fefef9;
  display: flex;
  flex-direction: column;
  color: #5b5c54;
  font-size: 14px;
}
.dlg-title {
  height: 42px;
  flex: none;
  display: flex;
  align-items: center;
  justify-content: center;
  position: relative;
  padding-bottom: 2px;
  border-radius: 8px 8px 0 0;
  background: linear-gradient(#3a3b33 12px, #42433a 12px, #42433a 37px, #33342c 37px);
}
.dlg-title-text { color: #e6e6de; font-weight: 700; font-size: 14px; letter-spacing: .2px; }
.dlg-close {
  position: absolute;
  right: 9px;
  top: 13px;
  width: 16px;
  height: 16px;
  border-radius: 50%;
  background: #e0552a;
  color: #5c1e0a;
  font-size: 11px;
  line-height: 14px;
  text-align: center;
}
.dlg-tabs {
  height: 26px;
  flex: none;
  display: flex;
  padding-top: 1px;
  border-bottom: 1px solid #cfd0c8;
}
.dlg-tab {
  flex: 1;
  display: flex;
  align-items: center;
  justify-content: center;
}
.dlg-tab-on {
  flex: 0 0 188px;
  border: 1px solid #cfd0c8;
  border-width: 0 1px 0 0;
  border-radius: 0 4px 0 0;
}
.dlg-body {
  flex: 1;
  display: flex;
  align-items: flex-start;
  padding: 14px 0 0 13px;
}
.dlg-icon {
  width: 60px;
  height: 58px;
  flex: none;
  border: 1px solid #cfd0c8;
  border-radius: 4px;
  display: flex;
  justify-content: center;
  padding-top: 4px;
  background: linear-gradient(#fefef9 40px, #f2e8ea 40px);
}
.doc-bright { --sheet: #eff1ea; --band: #e3e5de; --edge: #b4b6ac; --fold: #d6e2e6; --ink: #5a5c52; }
.dlg-grid {
  margin: 6px 0 0 19px;
  display: grid;
  grid-template-columns: 108px 220px;
  grid-template-rows: 31px 23px 23px 23px 46px 46px 24px;
  align-items: end;
  white-space: nowrap;
  letter-spacing: .2px;
}
.k-name { height: 26px; line-height: 28px; align-self: start; }
.v { line-height: 23px; letter-spacing: .3px; }
.v-size { letter-spacing: .02px; }
.v-fa { word-spacing: 2px; }
.k { line-height: 23px; }
.k.k-name { line-height: 28px; }
.name-entry {
  display: block;
  height: 26px;
  width: 201px;
  margin-left: 1px;
  padding: 4px 7px;
  border: 1px solid #eeb195;
  border-radius: 4px;
  background: #fffdf8;
  align-self: start;
}
.name-sel {
  display: block;
  height: 16px;
  overflow: hidden;
  background: #f2854f;
  color: #fff;
  line-height: 17px;
}
.name-text { display: block; margin-left: -3px; white-space: nowrap; letter-spacing: 0; }

/* AnyDesk status */
.rd-status {
  height: 30px;
  flex: none;
  background: #fff;
  border-top: 1px solid #c9c9c9;
  border-bottom: 1px solid #e5e5e5;
  display: flex;
  align-items: center;
  padding: 0 0 1px 5px;
  font-size: 16.350px;
  color: #111;
}
.conn-icon { width: 20px; height: 20px; flex: none; }
.conn-text { margin-left: 11px; white-space: nowrap; }
.conn-time { margin-left: auto; margin-right: 5px; }
.conn-ico { width: 30px; display: flex; justify-content: center; }

/* Windows taskbar */
.taskbar {
  flex: 1;
  min-height: 0;
  display: flex;
  align-items: center;
  position: relative;
  background: linear-gradient(90deg, #dfdfe3, #e6e1e6 50%, #efe0e8);
  color: #1f1f1f;
}
.weather { flex: 0 0 557px; display: flex; align-items: center; padding-left: 29px; }
.sun { width: 24px; height: 24px; border-radius: 50%; background: linear-gradient(135deg, #f5c130, #f2720e); }
.weather-text { display: flex; flex-direction: column; margin: 1px 0 0 12px; font-size: 14px; line-height: 20px; }
.w-desc { color: #5f5f5f; }
.task-center { display: flex; align-items: center; height: 100%; }
.win-logo { width: 30px; height: 30px; flex: none; }
.searchbox {
  width: 271px;
  height: 38px;
  margin-left: 17px;
  border-radius: 19px;
  background: #f6f6f7;
  border: 1px solid #dedee0;
  border-bottom-color: #c3c3c6;
  display: flex;
  align-items: center;
  padding-left: 13px;
  flex: none;
}
.search-text { margin-left: 12px; font-size: 17px; color: #555; }
.medal-art { margin-left: auto; margin-right: 1px; }
.tapp {
  position: relative;
  width: 55px;
  height: 48px;
  display: flex;
  align-items: center;
  justify-content: center;
  flex: none;
}
.searchbox + .tapp { margin-left: 5px; }
.tapp-run::after {
  content: "";
  position: absolute;
  left: 24px;
  bottom: -1px;
  width: 7px;
  height: 4px;
  border-radius: 2px;
  background: #7e7e80;
}
.tapp-active { background: #f3eef2; border-radius: 5px; }
.tapp-active::after {
  content: "";
  position: absolute;
  left: 18px;
  bottom: 0;
  width: 19px;
  height: 4px;
  border-radius: 2px;
  background: #0b79d0;
}
.t-badge {
  position: absolute;
  left: 31px;
  top: 0;
  width: 20px;
  height: 20px;
  border-radius: 50%;
  background: #0a78d1;
  color: #fff;
  font-size: 13px;
  line-height: 20px;
  text-align: center;
}
.t-l { font: 400 10px "Noto Sans", sans-serif; fill: #e8e8f4; }
.t-w { font: 700 12px "Noto Sans", sans-serif; fill: #fff; }
.t-4 { font: 700 9px "Noto Sans", sans-serif; fill: #fff; }
.tray {
  position: absolute;
  left: 0;
  top: 0;
  right: 0;
  bottom: 0;
  pointer-events: none;
  display: flex;
  align-items: center;
  padding-left: 1527px;
  font-size: 14.500px;
}
.tray-chev { margin-right: 24px; }
.tray-drop { margin-right: 18px; }
.tray-cloud { margin-right: 21px; }
.tray-lang { width: 34px; margin-right: 21px; text-align: center; }
.tray-net { margin-right: 9px; }
.tray-vol { margin-right: 10px; }
.tray-clock {
  width: 86px;
  display: flex;
  flex-direction: column;
  align-items: flex-end;
  font-size: 15px;
  line-height: 19px;
}
.tray-note {
  margin-left: 9px;
  width: 20px;
  height: 20px;
  border-radius: 50%;
  background: #0a78d1;
  color: #fff;
  font-size: 13px;
  line-height: 20px;
  text-align: center;
}
```
